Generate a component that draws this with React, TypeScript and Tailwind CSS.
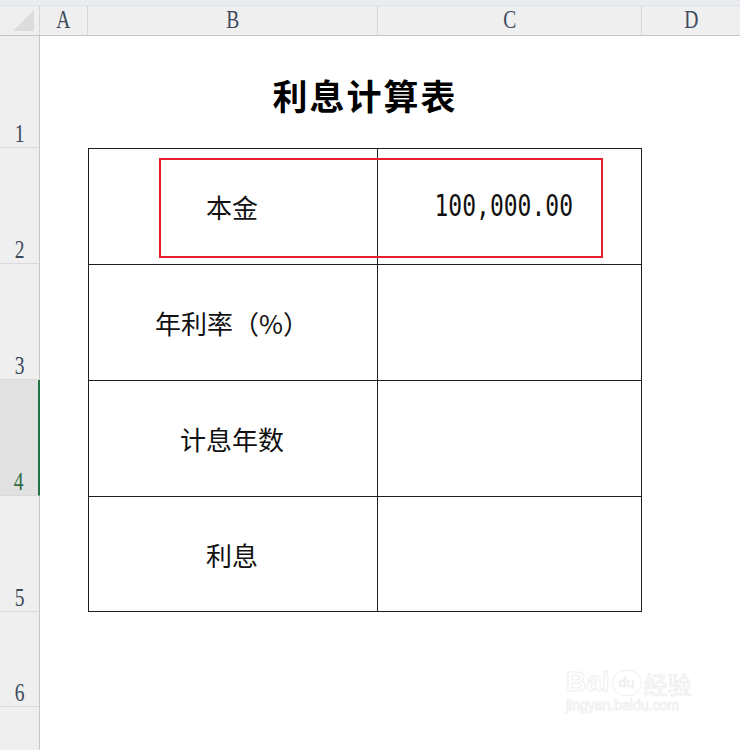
import React from 'react';

const cjk = { fontFamily: '"Noto Sans CJK SC", "Noto Sans", sans-serif' };
const serif = { fontFamily: '"Liberation Serif", "DejaVu Serif", serif' };

const rows = [
  { n: '2', label: '本金', value: '100,000.00' },
  { n: '3', label: '年利率（%）', value: '' },
  { n: '4', label: '计息年数', value: '' },
  { n: '5', label: '利息', value: '' },
];

function RowHead({ n, h, active }: { n: string; h: string; active?: boolean }) {
  return (
    <div
      className={`${h} w-[40px] shrink-0 flex items-end justify-center pb-[2px] border-b border-[#d9d9d9] text-[23px] leading-none ${
        active
          ? 'bg-[#e1e1e1] border-r-2 border-r-[#217346] text-[#2e6b46]'
          : 'bg-[#efefef] border-r border-r-[#c6c6c6] text-[#3c4a5c]'
      }`}
      style={serif}
    >
      <span className="scale-x-[0.85] scale-y-[1.1]">{n}</span>
    </div>
  );
}

export default function App() {
  return (
    <div className="relative w-[740px] h-[750px] overflow-hidden bg-white">
      {/* ribbon edge */}
      <div className="h-[6px] bg-[#e9edf1] border-b border-[#dde2e7]" />

      {/* column headers */}
      <div className="flex h-[30px] bg-[#efefef] border-b border-[#c4c4c4] text-[23px] text-[#3c4a5c]" style={serif}>
        <div className="w-[40px] shrink-0 flex items-end justify-end pr-[4px] pb-[3px] border-r border-[#d6d6d6]">
          <svg width="22" height="22" viewBox="0 0 22 22">
            <polygon points="21,0 21,21 0,21" fill="#dcdcdc" />
          </svg>
        </div>
        <div className="w-[48px] shrink-0 flex items-center justify-center border-r border-[#d6d6d6]">
          <span className="scale-x-[0.85] scale-y-[1.1]">A</span>
        </div>
        <div className="w-[290px] shrink-0 flex items-center justify-center border-r border-[#d6d6d6]">
          <span className="scale-x-[0.85] scale-y-[1.1]">B</span>
        </div>
        <div className="w-[264px] shrink-0 flex items-center justify-center border-r border-[#d6d6d6]">
          <span className="scale-x-[0.85] scale-y-[1.1]">C</span>
        </div>
        <div className="flex-1 flex items-center justify-center">
          <span className="scale-x-[0.85] scale-y-[1.1]">D</span>
        </div>
      </div>

      {/* row 1: title */}
      <div className="flex">
        <RowHead n="1" h="h-[112px]" />
        <div className="w-[48px] shrink-0" />
        <div className="w-[554px] shrink-0 flex items-center justify-center pt-[6px]">
          <span className="text-[35px] font-bold text-black tracking-[2px]" style={cjk}>
            利息计算表
          </span>
        </div>
      </div>

      {/* rows 2-5: table */}
      {rows.map((r, i) => (
        <div key={r.n} className="relative flex">
          <RowHead n={r.n} h="h-[116px]" active={r.n === '4'} />
          <div className="w-[48px] shrink-0" />
          <div
            className={`w-[290px] h-[116px] shrink-0 flex items-center justify-center border-l border-t border-r border-[#1f1f1f] ${
              i === rows.length - 1 ? 'border-b' : ''
            } text-[26px] text-[#111] pr-[2px]`}
            style={cjk}
          >
            {r.label}
          </div>
          <div
            className={`w-[264px] h-[116px] shrink-0 flex items-center justify-end pr-[68px] border-t border-r border-[#1f1f1f] ${
              i === rows.length - 1 ? 'border-b' : ''
            }`}
          >
            {r.value && (
              <span
                className="text-[23px] text-[#111] scale-y-[1.3]"
                style={{ fontFamily: '"DejaVu Sans Mono", "Liberation Mono", monospace' }}
              >
                {r.value}
              </span>
            )}
          </div>
          {r.n === '2' && (
            <div className="absolute left-[159px] top-[10px] w-[444px] h-[100px] border-2 border-[#e31e2a]" />
          )}
        </div>
      ))}

      {/* rows 6-7 */}
      <div className="flex">
        <RowHead n="6" h="h-[95px]" />
      </div>
      <div className="flex">
        <RowHead n="" h="h-[60px]" />
      </div>

      {/* watermark */}
      <div className="absolute left-[566px] top-[668px] flex flex-col items-start select-none">
        <div className="flex items-end gap-[2px]">
          <span
            className="text-[28px] font-bold leading-none text-transparent [-webkit-text-stroke:1px_#efefef]"
            style={{ fontFamily: '"Liberation Sans", sans-serif' }}
          >
            Bai
          </span>
          <span className="relative w-[30px] h-[26px] rounded-full border border-[#efefef] flex items-center justify-center text-[13px] text-transparent [-webkit-text-stroke:1px_#efefef]">
            du
          </span>
          <span className="text-[24px] leading-none text-transparent [-webkit-text-stroke:1px_#efefef]" style={cjk}>
            经验
          </span>
        </div>
        <span
          className="mt-[2px] text-[14px] leading-none text-transparent [-webkit-text-stroke:1px_#f1f1f1]"
          style={{ fontFamily: '"Liberation Sans", sans-serif' }}
        >
          jingyan.baidu.com
        </span>
      </div>
    </div>
  );
}
